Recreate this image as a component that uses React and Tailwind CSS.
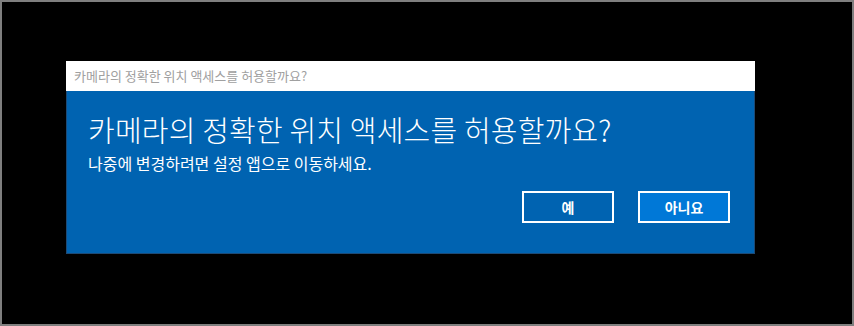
export default function App() {
  const font = { fontFamily: '"Noto Sans CJK KR", "Noto Sans", sans-serif' };
  return (
    <div className="w-[854px] h-[326px] bg-black border-2 border-[#7f7f7f] pt-[59px] pl-[64px]" style={font}>
      <div className="w-[689px] flex flex-col">
        <div className="h-[30px] bg-white flex items-center pl-[8px] text-[13px] text-[#a0a0a0]">
          카메라의 정확한 위치 액세스를 허용할까요?
        </div>
        <div className="h-[163px] bg-[#0063b1] border border-t-0 border-[#1d4a75] pl-[21px] pr-[24px] flex flex-col">
          <div className="mt-[19px] text-[29px] leading-[38px] text-white font-light tracking-[0.2px]">
            카메라의 정확한 위치 액세스를 허용할까요?
          </div>
          <div className="mt-[4px] text-[16px] leading-[22px] text-white">
            나중에 변경하려면 설정 앱으로 이동하세요.
          </div>
          <div className="mt-[17px] flex justify-end gap-[24px]">
            <button className="w-[92px] h-[32px] border-2 border-white bg-[#0063b1] text-white text-[14px] font-bold flex items-center justify-center">
              예
            </button>
            <button className="w-[92px] h-[32px] border-2 border-white bg-[#0078d7] text-white text-[14px] font-bold flex items-center justify-center">
              아니요
            </button>
          </div>
        </div>
      </div>
    </div>
  );
}
